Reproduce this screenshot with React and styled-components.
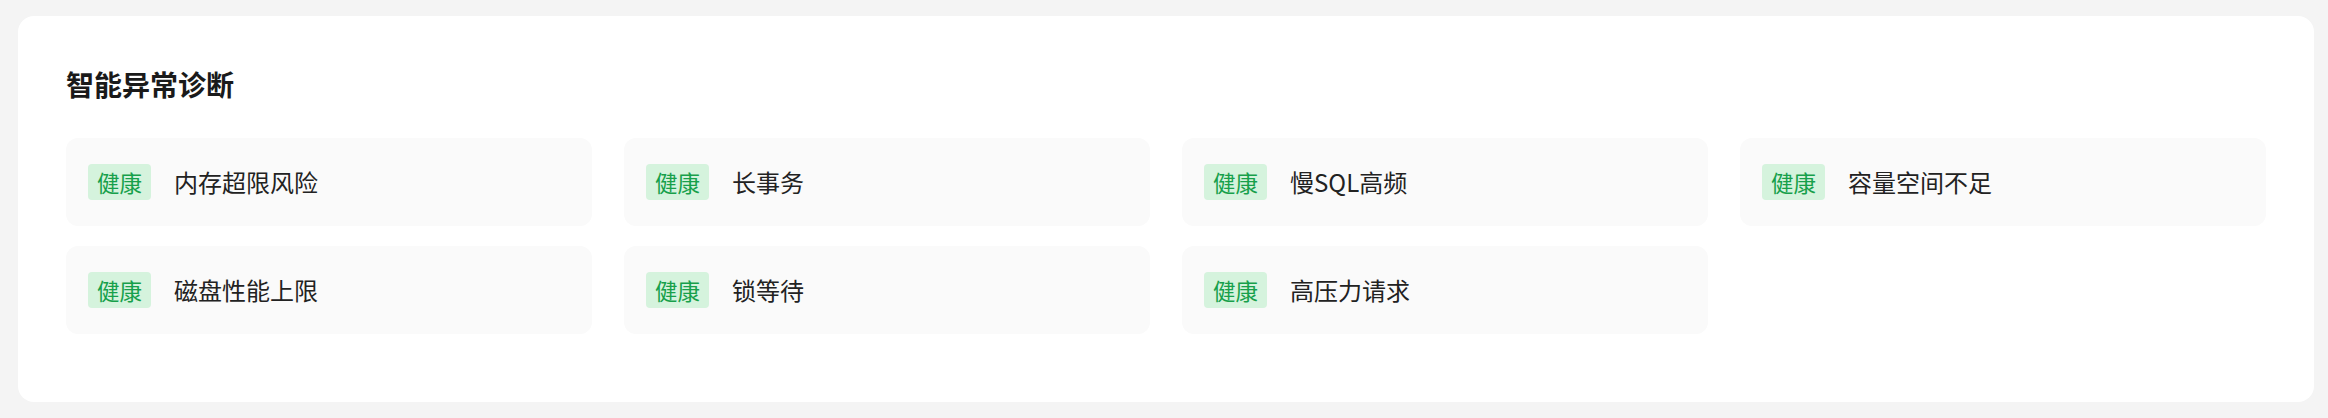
import React from 'react';
import styled, { createGlobalStyle } from 'styled-components';

const GlobalStyle = createGlobalStyle`
  html, body {
    margin: 0;
    padding: 0;
    background: #f4f4f4;
    font-family: "Noto Sans CJK SC", "Noto Sans", "Liberation Sans", sans-serif;
  }
`;

const Page = styled.div`
  padding: 16px 14px 16px 18px;
`;

const Panel = styled.section`
  background: #ffffff;
  border-radius: 16px;
  padding: 48px 48px 68px;
`;

const Title = styled.h2`
  margin: 0 0 34px;
  font-size: 28px;
  line-height: 40px;
  font-weight: 700;
  color: #1a1a1a;
`;

const Grid = styled.div`
  display: grid;
  grid-template-columns: repeat(4, 1fr);
  column-gap: 32px;
  row-gap: 20px;
`;

const Item = styled.div`
  display: flex;
  align-items: center;
  gap: 23px;
  height: 88px;
  box-sizing: border-box;
  padding: 0 22px;
  background: #fafafa;
  border-radius: 12px;
`;

const Badge = styled.span`
  display: inline-block;
  padding: 0 9px;
  height: 36px;
  line-height: 36px;
  font-size: 22.5px;
  border-radius: 4px;
  color: ${p => (p.$ok ? '#17a04b' : '#d9363e')};
  background: ${p => (p.$ok ? '#d5f3dd' : '#fde2e2')};
`;

const Label = styled.span`
  font-size: 24px;
  line-height: 36px;
  color: #222222;
`;

const checks = [
  '内存超限风险',
  '长事务',
  '慢SQL高频',
  '容量空间不足',
  '磁盘性能上限',
  '锁等待',
  '高压力请求',
];

export default function App() {
  return (
    <>
      <GlobalStyle />
      <Page>
        <Panel>
          <Title>智能异常诊断</Title>
          <Grid>
            {checks.map(name => (
              <Item key={name}>
                <Badge $ok>健康</Badge>
                <Label>{name}</Label>
              </Item>
            ))}
          </Grid>
        </Panel>
      </Page>
    </>
  );
}
